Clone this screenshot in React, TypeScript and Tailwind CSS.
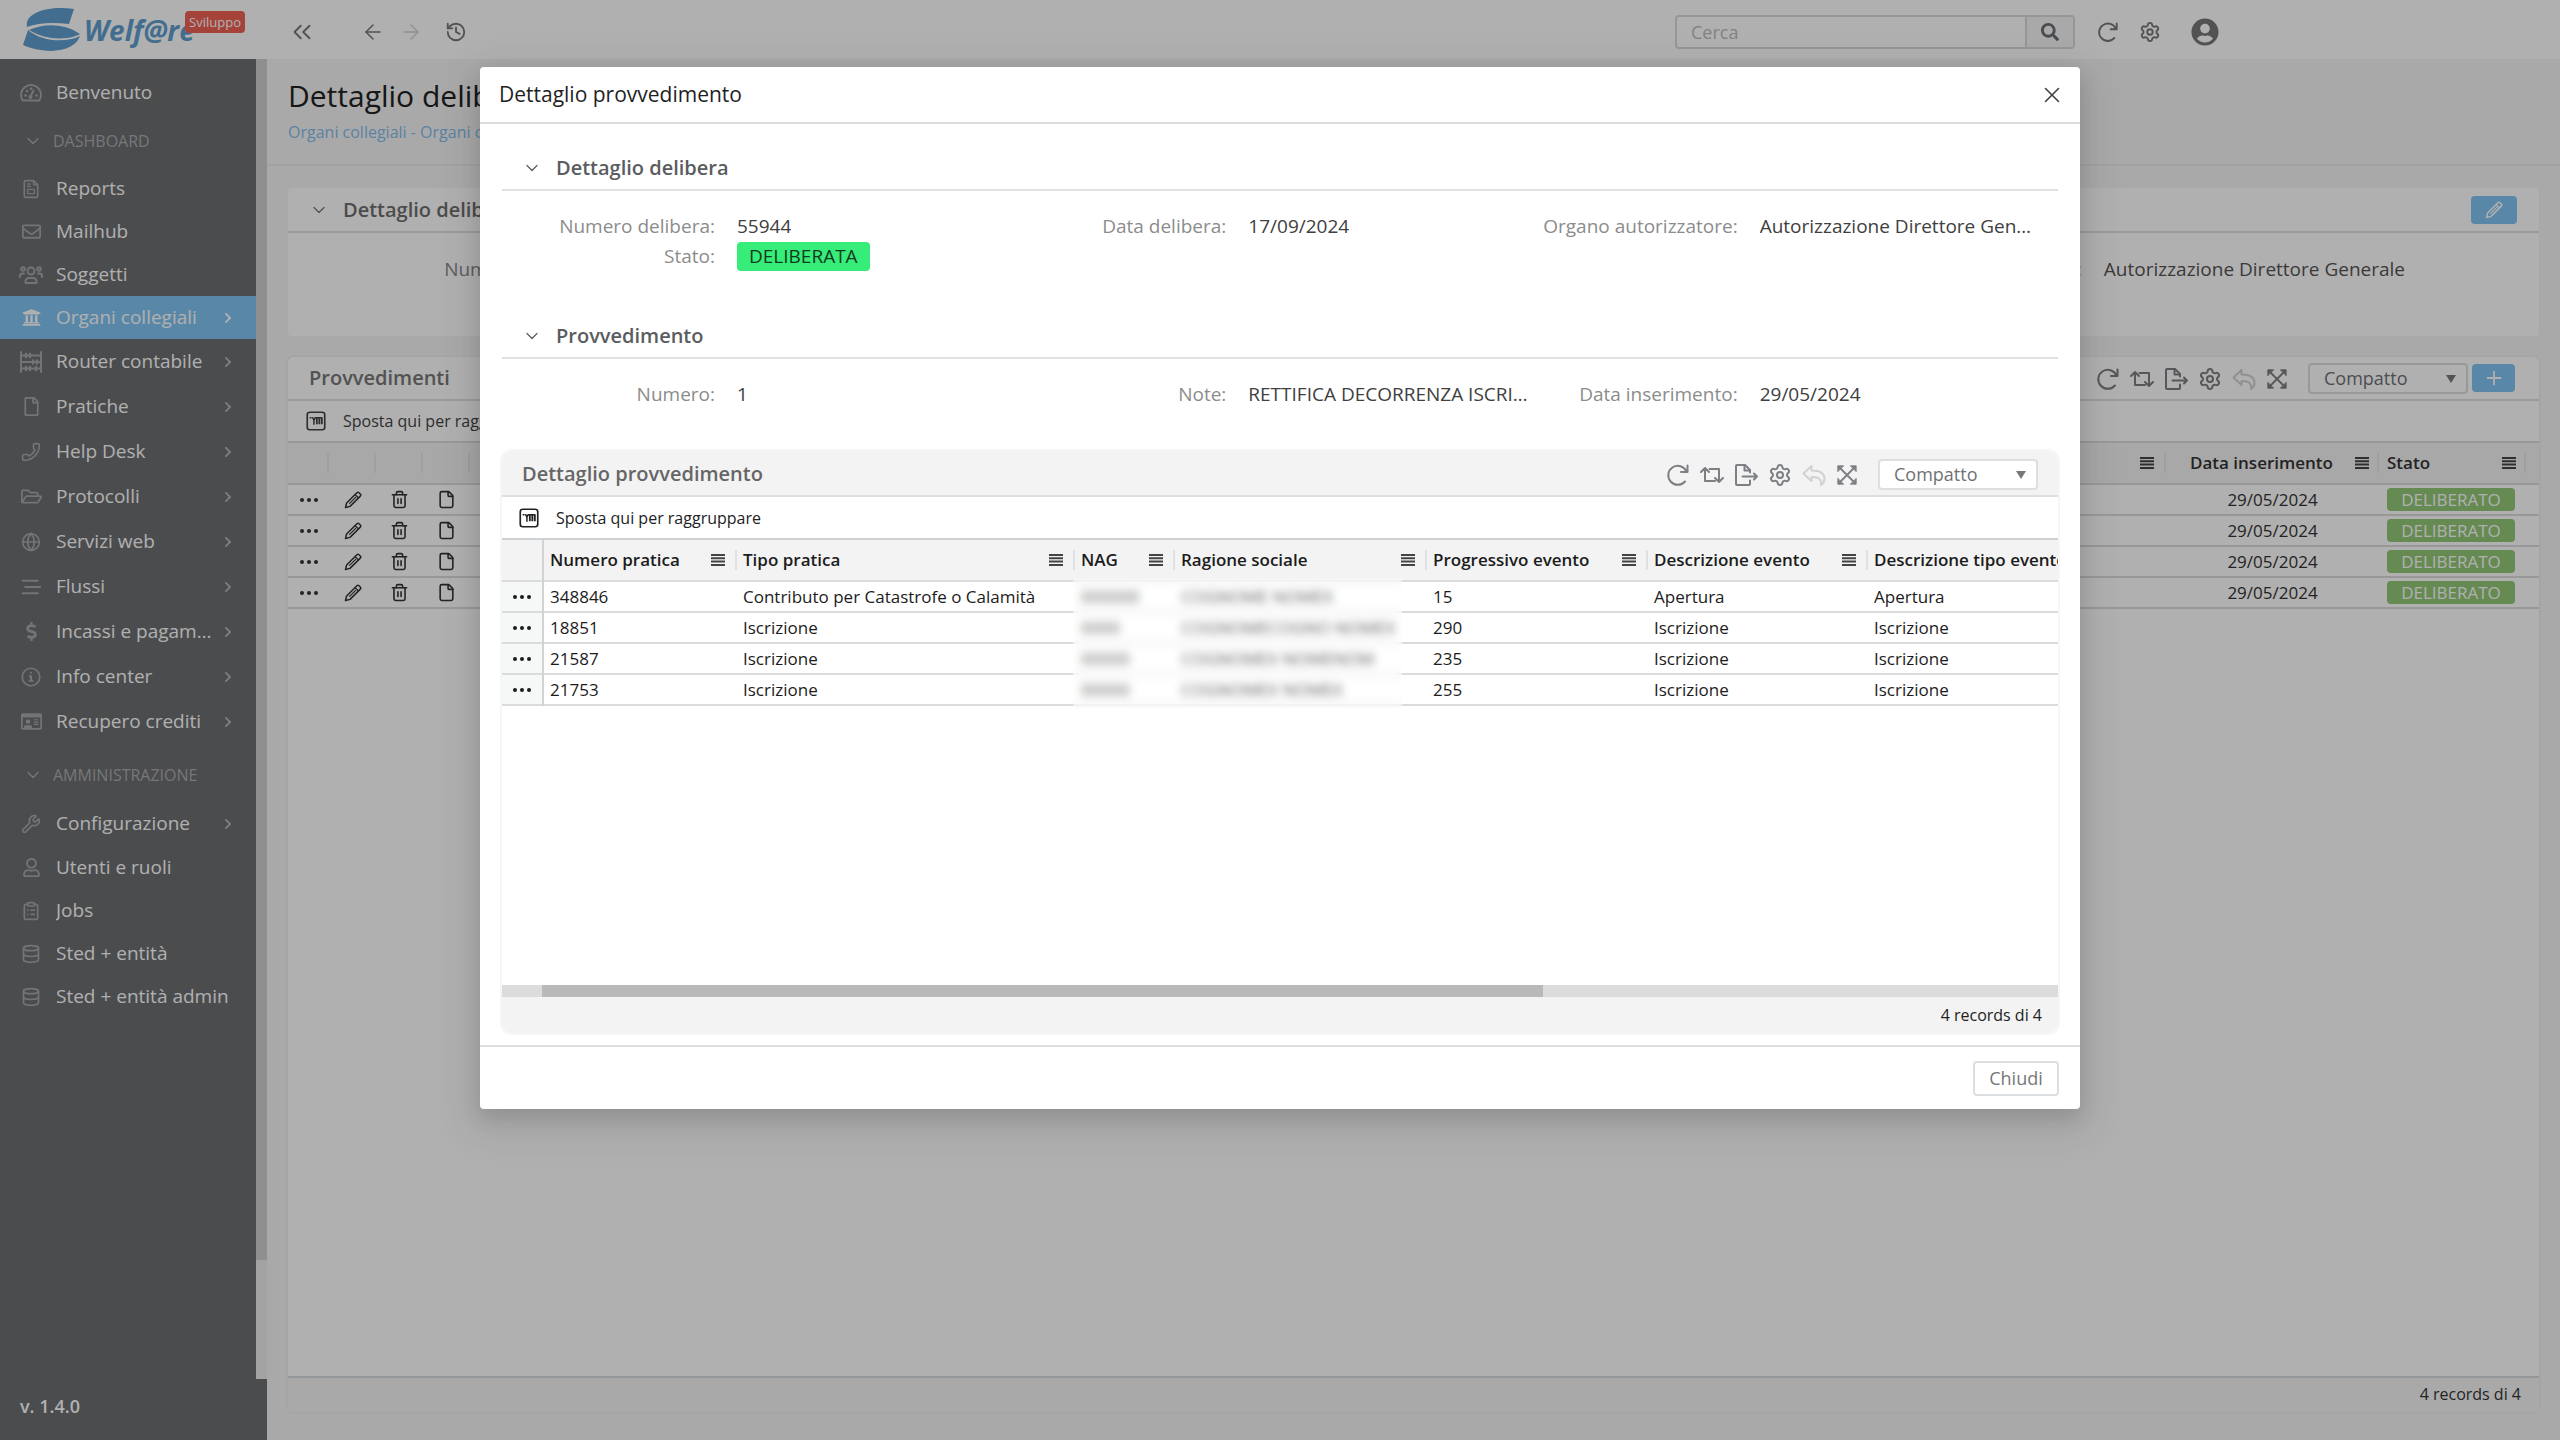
import type { ReactNode } from 'react';
import clsx from 'clsx';
import {
  ArrowLeft,
  ArrowRight,
  ChevronDown,
  ChevronsLeft,
  ClipboardList,
  Database,
  File,
  Globe,
  History,
  Phone,
  Plus,
  Settings,
  Trash2,
  Wrench,
  X,
} from 'lucide-react';
import {
  FaChevronRight,
  FaDollarSign,
  FaRegEnvelope,
  FaRegFile,
  FaRegFolderOpen,
  FaRegIdCard,
  FaRegUser,
  FaSearch,
  FaUniversity,
  FaUserCircle,
} from 'react-icons/fa';

/* ---------- icons ---------- */

type SvgProps = { className?: string; children: ReactNode };

function Svg({ className, children }: SvgProps) {
  return (
    <svg
      viewBox="0 0 24 24"
      fill="none"
      stroke="currentColor"
      strokeWidth="2"
      strokeLinecap="round"
      strokeLinejoin="round"
      className={className}
      aria-hidden="true"
    >
      {children}
    </svg>
  );
}

const GaugeIcon = () => (
  <Svg className="size-6">
    <path d="M3.6 19.5A10 10 0 1 1 20.4 19.5Z" />
    <path d="M11.5 15.5 14.5 9.5" />
    <circle cx="11.5" cy="16" r="1" />
    <path d="M6.5 14.5h.1M8 10h.1M12 7.8h.1M17.5 14.5h.1" strokeWidth="2.6" />
  </Svg>
);

const ReportIcon = () => (
  <Svg className="size-5">
    <path d="M4 4a2 2 0 0 1 2-2h9l5 5v13a2 2 0 0 1-2 2H6a2 2 0 0 1-2-2Z" />
    <path d="M15 2v5h5M8 6h3M8 9h3M8 12.5h8v5H8Z" strokeWidth="1.6" />
  </Svg>
);

const UsersIcon = () => (
  <Svg className="size-6">
    <circle cx="12" cy="8" r="3.5" />
    <path d="M6.5 20v-1.5a3.5 3.5 0 0 1 3.5-3.5h4a3.5 3.5 0 0 1 3.5 3.5V20Z" />
    <circle cx="4" cy="6" r="1.8" />
    <circle cx="20" cy="6" r="1.8" />
    <path d="M1 14v-1a2.5 2.5 0 0 1 2.5-2.5H5M23 14v-1a2.5 2.5 0 0 0-2.5-2.5H19" />
  </Svg>
);

const AbacusIcon = () => (
  <Svg className="size-6">
    <path d="M2 2v20M22 2v20M2 5.5h20M2 12h20M2 18.5h20" />
    <path d="M7 4v3M11 4v3M14 10.5v3M18 10.5v3M7 17v3M11 17v3M17 17v3" strokeWidth="2.5" />
  </Svg>
);

const FlowIcon = () => (
  <Svg className="size-5">
    <path d="M2 4.5h18M5 12h18M2 19.5h18" strokeWidth="2.5" />
  </Svg>
);

const InfoIcon = () => (
  <Svg className="size-5">
    <circle cx="12" cy="12" r="10.5" />
    <path d="M12 7h.01M10.5 11h1.5v5.5M10.5 16.5h3.2" strokeWidth="2.5" />
  </Svg>
);

const RedoIcon = ({ className = 'size-6' }: { className?: string }) => (
  <Svg className={className}>
    <path d="M20.5 8.5A9.5 9.5 0 1 0 19 18.5" />
    <path d="M21.5 2.5v6.5H15" />
  </Svg>
);

const RetweetIcon = () => (
  <Svg className="size-6">
    <path d="M1 9l4-4 4 4M5 5.5V18h10M9.5 6H19v12.5M15 15l4 4 4-4" />
  </Svg>
);

const ExportIcon = () => (
  <Svg className="size-6">
    <path d="M16 9.5V7l-5-5H3a1 1 0 0 0-1 1v18a1 1 0 0 0 1 1h12a1 1 0 0 0 1-1v-3.5" />
    <path d="M10.5 2v5.5H16M8.5 13.5H23M20 10.5l3 3-3 3" />
  </Svg>
);

const UndoIcon = () => (
  <Svg className="size-6">
    <path d="M1.5 10.5 9.5 3v4.5c7 0 13 1.5 13 8.5 0 2.5-1.5 4.5-3.5 6 1-5-1.5-8-9.5-8V18Z" />
  </Svg>
);

const ExpandIcon = () => (
  <Svg className="size-[22px]">
    <path d="M3 3 21 21M21 3 3 21" />
    <path d="M2 8V2h6ZM22 8V2h-6ZM2 16v6h6ZM22 16v6h-6Z" fill="currentColor" strokeWidth="1" />
  </Svg>
);

const GroupIcon = () => (
  <Svg className="size-5 shrink-0">
    <rect x="1.5" y="1.5" width="21" height="21" rx="3" />
    <path d="M5 8h1M8 8l1.5 3L11 8M9.5 11v5M11 8h8" strokeWidth="1.8" />
    <path d="M13 8v8M16 8v8M19 8v8" strokeWidth="2.2" strokeLinecap="butt" />
  </Svg>
);

const PencilIcon = ({ className = 'size-5' }: { className?: string }) => (
  <Svg className={className}>
    <path d="M2 22l1.5-6L17.2 2.3a2 2 0 0 1 2.8 0l1.7 1.7a2 2 0 0 1 0 2.8L8 20.5Z" />
    <path d="M15 5l4 4M7.5 16.5l8-8" strokeWidth="1.6" />
  </Svg>
);

const Burger = () => (
  <svg viewBox="0 0 14 12" className="h-3 w-3.5 shrink-0 text-[#444]" fill="currentColor" aria-hidden="true">
    <path d="M0 0h14v2H0zM0 3.3h14v2H0zM0 6.6h14v2H0zM0 10h14v2H0z" />
  </svg>
);

const Dots = () => (
  <svg viewBox="0 0 18 4" className="mx-auto h-1 w-[18px]" fill="currentColor" aria-hidden="true">
    <circle cx="2" cy="2" r="2" />
    <circle cx="9" cy="2" r="2" />
    <circle cx="16" cy="2" r="2" />
  </svg>
);

/* ---------- data ---------- */

type Item = { label: string; icon: ReactNode; sub?: boolean; active?: boolean };

const dashboardItems: Item[] = [
  { label: 'Reports', icon: <ReportIcon /> },
  { label: 'Mailhub', icon: <FaRegEnvelope size={19} /> },
  { label: 'Soggetti', icon: <UsersIcon /> },
  { label: 'Organi collegiali', icon: <FaUniversity size={19} />, sub: true, active: true },
  { label: 'Router contabile', icon: <AbacusIcon />, sub: true },
  { label: 'Pratiche', icon: <FaRegFile size={19} />, sub: true },
  { label: 'Help Desk', icon: <Phone size={20} className="-scale-x-100" />, sub: true },
  { label: 'Protocolli', icon: <FaRegFolderOpen size={21} />, sub: true },
  { label: 'Servizi web', icon: <Globe size={20} />, sub: true },
  { label: 'Flussi', icon: <FlowIcon />, sub: true },
  { label: 'Incassi e pagamenti', icon: <FaDollarSign size={19} />, sub: true },
  { label: 'Info center', icon: <InfoIcon />, sub: true },
  { label: 'Recupero crediti', icon: <FaRegIdCard size={21} />, sub: true },
];

const adminItems: Item[] = [
  { label: 'Configurazione', icon: <Wrench size={20} />, sub: true },
  { label: 'Utenti e ruoli', icon: <FaRegUser size={19} /> },
  { label: 'Jobs', icon: <ClipboardList size={20} /> },
  { label: 'Sted + entità', icon: <Database size={20} /> },
  { label: 'Sted + entità admin', icon: <Database size={20} /> },
];

const columns = [
  { label: 'Numero pratica', width: 'w-[194px]' },
  { label: 'Tipo pratica', width: 'w-[338px]' },
  { label: 'NAG', width: 'w-[100px]' },
  { label: 'Ragione sociale', width: 'w-[252px]' },
  { label: 'Progressivo evento', width: 'w-[221px]' },
  { label: 'Descrizione evento', width: 'w-[220px]' },
  { label: 'Descrizione tipo evento', width: 'w-[240px]' },
];

const rows = [
  ['348846', 'Contributo per Catastrofe o Calamità', '000000', 'COGNOME NOMEX', '15', 'Apertura', 'Apertura'],
  ['18851', 'Iscrizione', '0000', 'COGNOMECOGNO NOMEX', '290', 'Iscrizione', 'Iscrizione'],
  ['21587', 'Iscrizione', '00000', 'COGNOMEX NOMENOM', '235', 'Iscrizione', 'Iscrizione'],
  ['21753', 'Iscrizione', '00000', 'COGNOMEX NOMEX', '255', 'Iscrizione', 'Iscrizione'],
];

/* ---------- shared parts ---------- */

function SidebarItem({ label, icon, sub, active }: Item) {
  return (
    <a
      href="#"
      className={clsx(
        'flex items-center pl-4 text-[19px] text-white',
        sub && !active ? 'h-[45px]' : 'h-[43px]',
        active && 'bg-[#82c4f3]',
      )}
    >
      <span className={clsx('flex w-[30px] shrink-0 justify-center', active ? 'text-white' : 'text-[#a6a8aa]')}>
        {icon}
      </span>
      <span className={clsx('ml-2.5 truncate', sub ? 'w-[157px]' : 'flex-1')}>{label}</span>
      {sub && <FaChevronRight size={12} className={clsx('mr-[22px] ml-auto', active ? 'text-white' : 'text-[#b4b5b7]')} />}
    </a>
  );
}

function SidebarHeading({ children }: { children: ReactNode }) {
  return (
    <button type="button" className="flex h-[53px] w-full items-center pl-[23px] text-base font-medium text-[#acadaf]">
      <ChevronDown size={20} strokeWidth={1.5} />
      <span className="ml-2.5">{children}</span>
    </button>
  );
}

function Tools() {
  return (
    <div className="flex items-center gap-2.5 pt-0.5 text-[#7c7f83]">
      <button type="button" aria-label="Aggiorna"><RedoIcon /></button>
      <button type="button" aria-label="Ripristina"><RetweetIcon /></button>
      <button type="button" aria-label="Esporta"><ExportIcon /></button>
      <button type="button" aria-label="Impostazioni"><Settings size={24} /></button>
      <button type="button" aria-label="Annulla" className="text-[#cfd1d3]"><UndoIcon /></button>
      <button type="button" aria-label="Espandi"><ExpandIcon /></button>
    </div>
  );
}

function DensitySelect({ id }: { id: string }) {
  return (
    <div className="relative">
      <label htmlFor={id} className="sr-only">Densità</label>
      <select
        id={id}
        className="block h-[31px] w-40 appearance-none rounded-sm border-2 border-[#dcdee0] bg-white pl-3.5 text-lg leading-6 text-[#6f7276]"
      >
        <option>Compatto</option>
      </select>
      <svg viewBox="0 0 10 8" className="pointer-events-none absolute top-3 right-3 h-2 w-2.5" fill="#777" aria-hidden="true">
        <path d="M0 0h10L5 8z" />
      </svg>
    </div>
  );
}

function Field({ label, children }: { label: string; children: ReactNode }) {
  return (
    <div className="flex h-[30px] items-center gap-[22px] pr-1.5 text-[19px]">
      <dt className="w-[202px] shrink-0 text-right whitespace-nowrap text-[#8c8c8c]">{label}:</dt>
      <dd className="truncate text-[#404040]">{children}</dd>
    </div>
  );
}

function SectionTitle({ children }: { children: ReactNode }) {
  return (
    <h3 className="flex h-[44px] items-center border-b-2 border-[#dfe2e5] pl-5 text-xl font-semibold text-[#5a5d60]">
      <ChevronDown size={20} strokeWidth={1.5} className="mr-3.5" />
      {children}
    </h3>
  );
}

/* ---------- page ---------- */

function TopBar() {
  return (
    <header className="flex h-[59px] shrink-0 items-center bg-white pt-1 text-[#777]">
      <a href="#" className="relative flex w-[267px] items-center pb-1 pl-[22px]">
        <svg viewBox="0 0 60 46" className="h-[46px] w-[60px]" fill="#619fd0" aria-hidden="true">
          <path d="M5 20C2 6 26-2 52 2L47 17C30 15 16 16 5 20Z" />
          <path d="M7 23C22 16 42 16 58 27C48 33 24 34 7 23Z" />
          <path d="M6 23C20 35 44 36 58 29C54 42 30 50 1 38Z" />
        </svg>
        <span className="ml-0.5 text-[28px] leading-9 font-bold text-[#619fd0] italic">Welf@re</span>
        <span className="absolute top-1 right-[22px] rounded bg-[#f06155] px-1 text-[13px] leading-[22px] text-white">
          Sviluppo
        </span>
      </a>
      <button type="button" aria-label="Comprimi menu" className="ml-5"><ChevronsLeft size={30} strokeWidth={1.5} /></button>
      <button type="button" aria-label="Indietro" className="ml-11"><ArrowLeft size={24} strokeWidth={1.5} /></button>
      <button type="button" aria-label="Avanti" className="ml-3.5 text-[#d2d2d2]"><ArrowRight size={24} strokeWidth={1.5} /></button>
      <button type="button" aria-label="Cronologia" className="ml-[22px]"><History size={22} /></button>
      <form className="ml-auto flex h-[34px] rounded-sm border-2 border-[#dadada]">
        <label htmlFor="search" className="sr-only">Cerca</label>
        <input id="search" type="text" placeholder="Cerca" className="w-[348px] px-3.5 text-lg placeholder:text-[#bdbdbd]" />
        <button type="button" aria-label="Cerca" className="flex w-12 items-center justify-center border-l-2 border-[#dadada] bg-[#f5f5f5] text-[#6a6f75]">
          <FaSearch size={18} />
        </button>
      </form>
      <button type="button" aria-label="Aggiorna" className="ml-[22px]"><RedoIcon className="size-[22px]" /></button>
      <button type="button" aria-label="Impostazioni" className="ml-5"><Settings size={22} /></button>
      <button type="button" aria-label="Profilo" className="mr-[341px] ml-[30px]"><FaUserCircle size={28} /></button>
    </header>
  );
}

function Sidebar() {
  return (
    <aside className="flex w-[267px] shrink-0 flex-col bg-[#6d6e71]">
      <div className="flex flex-1">
        <nav className="w-64 pt-3">
          <SidebarItem label="Benvenuto" icon={<GaugeIcon />} />
          <SidebarHeading>DASHBOARD</SidebarHeading>
          {dashboardItems.map((item) => (
            <SidebarItem key={item.label} {...item} />
          ))}
          <div className="h-1" />
          <SidebarHeading>AMMINISTRAZIONE</SidebarHeading>
          {adminItems.map((item) => (
            <SidebarItem key={item.label} {...item} />
          ))}
        </nav>
        <div className="flex w-[11px] flex-col bg-[#ececec]">
          <div className="h-[91%] bg-[#cfcfcf]" />
        </div>
      </div>
      <p className="flex h-[61px] items-center pb-2 pl-5 text-lg font-semibold text-white">v. 1.4.0</p>
    </aside>
  );
}

function Content() {
  return (
    <main className="flex min-w-0 flex-1 flex-col bg-[#f5f5f5]">
      <div className="flex h-[107px] flex-col border-b-2 border-[#ebebeb] pt-[17px] pl-[21px]">
        <h1 className="text-[30px] leading-10 font-medium text-[#222]">Dettaglio delibera</h1>
        <a href="#" className="pt-1 text-base text-[#86bdec]">Organi collegiali - Organi collegiali</a>
      </div>

      <section className="mx-[21px] mt-[22px] h-[148px] rounded bg-white">
        <div className="flex h-[45px] items-center border-b-2 border-[#e0e0e0] pr-[22px] pl-[21px]">
          <ChevronDown size={20} strokeWidth={1.5} className="mr-3.5 text-[#777]" />
          <h2 className="text-xl font-semibold text-[#6e6e6e]">Dettaglio delibera</h2>
          <button type="button" aria-label="Modifica" className="ml-auto flex h-7 w-[46px] items-center justify-center rounded bg-[#82c4f3] text-white">
            <PencilIcon className="size-[18px]" />
          </button>
        </div>
        <dl className="flex pt-[22px] text-[19px] text-[#555]">
          <dt className="w-[312px] text-right text-[#888]">Numero delibera:</dt>
          <dt className="ml-auto text-[#888]">Organo autorizzatore:</dt>
          <dd className="mr-[134px] ml-[22px]">Autorizzazione Direttore Generale</dd>
        </dl>
      </section>

      <section className="mx-[19px] mt-[19px] mb-[26px] flex flex-1 flex-col rounded-lg border-2 border-[#f0f0f0] bg-white">
        <div className="flex h-[44px] items-center border-b-2 border-[#e0e0e0] pr-6 pl-[21px]">
          <h2 className="text-xl font-semibold text-[#777]">Provvedimenti</h2>
          <div className="mr-5 ml-auto"><Tools /></div>
          <DensitySelect id="density-page" />
          <button type="button" aria-label="Aggiungi" className="ml-1 flex h-7 w-[43px] items-center justify-center rounded bg-[#82c4f3] text-white">
            <Plus size={22} />
          </button>
        </div>
        <p className="flex h-[42px] items-center gap-[17px] border-b-2 border-[#dcdcdc] pl-[18px] text-base text-[#444]">
          <GroupIcon />
          Sposta qui per raggruppare
        </p>
        <div className="flex-1">
          <table className="w-full table-fixed text-[17px] text-[#333]">
            <thead className="bg-[#f3f3f3]">
              <tr className="h-[41px] border-b-2 border-[#dcdcdc]">
                <th className="w-[41px]"><div className="h-5 border-r-2 border-[#e6e6e6]" /></th>
                <th className="w-[47px]"><div className="h-5 border-r-2 border-[#e6e6e6]" /></th>
                <th className="w-[47px]"><div className="h-5 border-r-2 border-[#e6e6e6]" /></th>
                <th className="w-[47px]"><div className="h-5 border-r-2 border-[#e6e6e6]" /></th>
                <th><div className="flex h-5 items-center justify-end border-r-2 border-[#e6e6e6] pr-2.5"><Burger /></div></th>
                <th className="w-[213px]">
                  <div className="flex h-5 items-center justify-between border-r-2 border-[#e6e6e6] pr-2 pl-6 font-semibold">Data inserimento<Burger /></div>
                </th>
                <th className="w-[147px]">
                  <div className="flex h-5 items-center justify-between border-r-2 border-[#e6e6e6] pr-2 pl-2 font-semibold">Stato<Burger /></div>
                </th>
                <th className="w-[13px]" />
              </tr>
            </thead>
            <tbody>
              {rows.map((row) => (
                <tr key={row[0]} className="h-[31px] border-b-2 border-[#dcdcdc] leading-6">
                  <td><Dots /></td>
                  <td><PencilIcon className="mx-auto size-[18px]" /></td>
                  <td><Trash2 size={19} className="mx-auto" /></td>
                  <td><File size={19} className="mx-auto" /></td>
                  <td />
                  <td className="text-center">29/05/2024</td>
                  <td className="px-2">
                    <span className="block h-[23px] w-32 rounded bg-[#93c877] text-center leading-[23px] text-white">DELIBERATO</span>
                  </td>
                  <td />
                </tr>
              ))}
            </tbody>
          </table>
        </div>
        <p className="h-9 border-t-2 border-[#d8dce0] bg-[#f5f5f5] pr-[18px] text-right text-base leading-8 text-[#333]">4 records di 4</p>
      </section>
    </main>
  );
}

/* ---------- modal ---------- */

function DetailTable() {
  return (
    <div className="relative h-[445px] overflow-hidden">
      <table className="w-max table-fixed text-[17px] text-[#1c1c1c]">
        <thead className="bg-[#f3f3f3]">
          <tr className="h-[41px] border-b-2 border-[#d9dbdd]">
            <th className="w-[41px] border-r-2 border-[#d0d3d5]" />
            {columns.map((col) => (
              <th key={col.label} className={col.width}>
                <div className="flex h-5 items-center justify-between border-r-2 border-[#dfe2e4] pr-2.5 pl-1.5 font-semibold whitespace-nowrap">
                  {col.label}
                  <Burger />
                </div>
              </th>
            ))}
          </tr>
        </thead>
        <tbody>
          {rows.map((row) => (
            <tr key={row[0]} className="h-[31px] border-b-2 border-[#d9dbdd] leading-6">
              <td className="border-r-2 border-[#d0d3d5] bg-[#f6f8f8]"><Dots /></td>
              {row.map((cell, i) => (
                <td key={i} className="pl-1.5 whitespace-nowrap">{cell}</td>
              ))}
            </tr>
          ))}
        </tbody>
      </table>
      {/* personal data is masked */}
      <div className="absolute top-[38px] left-[571px] h-[130px] w-[329px] bg-white/30 backdrop-blur-[4px]" />
    </div>
  );
}

function Modal() {
  return (
    <div className="absolute inset-0 flex items-start justify-center bg-black/31 pt-[67px]">
      <div
        role="dialog"
        aria-labelledby="modal-title"
        className="w-[62.5%] rounded bg-white shadow-[0_8px_20px_rgba(0,0,0,0.12),0_12px_36px_12px_rgba(0,0,0,0.08)]"
      >
        <div className="flex h-[57px] items-center justify-between border-b-2 border-[#dcdddf] pr-[15px] pl-[19px]">
          <h2 id="modal-title" className="text-[21px] text-[#1f1f1f]">Dettaglio provvedimento</h2>
          <button type="button" aria-label="Chiudi finestra" className="text-[#444]"><X size={26} strokeWidth={1.5} /></button>
        </div>

        <div className="px-[22px] pt-[23px]">
          <SectionTitle>Dettaglio delibera</SectionTitle>
          <dl className="grid grid-cols-3 px-[11px] pt-5">
            <Field label="Numero delibera">55944</Field>
            <Field label="Data delibera">17/09/2024</Field>
            <Field label="Organo autorizzatore">Autorizzazione Direttore Generale</Field>
            <Field label="Stato">
              <span className="block rounded bg-[#35ed78] px-3 leading-[29px] text-[#123a1f]">DELIBERATA</span>
            </Field>
          </dl>

          <div className="h-11" />
          <SectionTitle>Provvedimento</SectionTitle>
          <dl className="grid grid-cols-3 px-[11px] pt-5">
            <Field label="Numero">1</Field>
            <Field label="Note">RETTIFICA DECORRENZA ISCRIZIONE</Field>
            <Field label="Data inserimento">29/05/2024</Field>
          </dl>
        </div>

        <section className="mx-5 mt-10 mb-2.5 overflow-hidden rounded-xl border-2 border-[#f4f7f7]">
          <div className="flex h-[46px] items-center border-b-2 border-[#dcdedf] bg-[#f3f3f3] pt-0.5 pr-5 pl-5">
            <h3 className="text-xl font-semibold text-[#666]">Dettaglio provvedimento</h3>
            <div className="mr-5 ml-auto"><Tools /></div>
            <DensitySelect id="density-modal" />
          </div>
          <p className="flex h-[43px] items-center gap-[17px] border-b-2 border-[#cfd2d4] pl-[17px] text-base text-[#222]">
            <GroupIcon />
            Sposta qui per raggruppare
          </p>
          <DetailTable />
          <div className="h-3 bg-[#dcdcdc] pl-10">
            <div className="h-3 w-[66%] bg-[#b9b9b9]" />
          </div>
          <p className="h-9 bg-[#f3f3f3] pr-4 text-right text-base leading-9 text-[#222]">4 records di 4</p>
        </section>

        <div className="flex h-[64px] items-center justify-end border-t-2 border-[#dcdedf] pr-[21px]">
          <button type="button" className="h-[35px] w-[86px] rounded-sm border-2 border-[#dcdfe1] text-lg leading-7 text-[#777]">Chiudi</button>
        </div>
      </div>
    </div>
  );
}

export default function App() {
  return (
    <div className="relative flex min-h-screen flex-col font-['Open_Sans',sans-serif]">
      <TopBar />
      <div className="flex flex-1">
        <Sidebar />
        <Content />
      </div>
      <Modal />
    </div>
  );
}
